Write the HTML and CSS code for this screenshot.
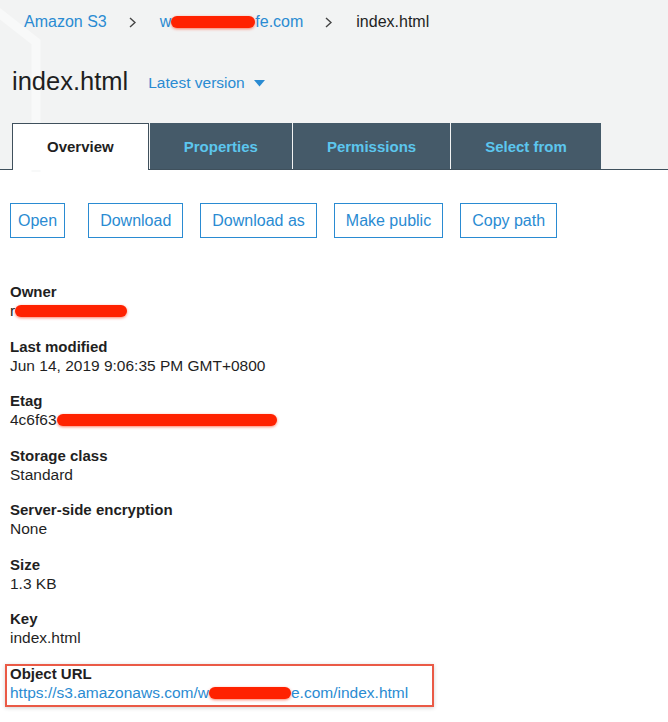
FILE: index.html
```html
<!DOCTYPE html>
<html lang="en">
<head>
<meta charset="utf-8">
<title>index.html - Amazon S3</title>
<link rel="stylesheet" href="styles.css">
</head>
<body>
<header class="header">
  <svg class="deco" width="60" height="175" viewBox="0 0 60 175"><polyline points="-10,6 36,42 36,172" fill="none" stroke="#f8f9f9" stroke-width="9"/></svg>
  <nav class="crumbs">
    <a class="link" href="#">Amazon S3</a>
    <svg class="chev" width="7" height="11" viewBox="0 0 7 11"><polyline points="1,1 6,5.5 1,10" fill="none" stroke="#444" stroke-width="1.4"/></svg>
    <a class="link" href="#">w<span class="redact r-crumb" aria-hidden="true"></span>fe.com</a>
    <svg class="chev" width="7" height="11" viewBox="0 0 7 11"><polyline points="1,1 6,5.5 1,10" fill="none" stroke="#444" stroke-width="1.4"/></svg>
    <span class="crumb-current">index.html</span>
  </nav>
  <div class="title-row">
    <h1 class="title">index.html</h1>
    <span class="version">Latest version <svg width="11" height="7" viewBox="0 0 11 7"><polygon points="0,0 11,0 5.5,6.5" fill="#2a8bd2"/></svg></span>
  </div>
  <div class="tabs">
    <div class="tab active">Overview</div>
    <div class="tab">Properties</div>
    <div class="tab">Permissions</div>
    <div class="tab">Select from</div>
  </div>
</header>
<main class="content">
  <div class="actions">
    <button class="btn btn-open">Open</button>
    <button class="btn">Download</button>
    <button class="btn">Download as</button>
    <button class="btn">Make public</button>
    <button class="btn">Copy path</button>
  </div>
  <dl class="props">
    <div class="prop"><dt>Owner</dt><dd>r<span class="redact r-owner" aria-hidden="true"></span></dd></div>
    <div class="prop"><dt>Last modified</dt><dd>Jun 14, 2019 9:06:35 PM GMT+0800</dd></div>
    <div class="prop"><dt>Etag</dt><dd>4c6f63<span class="redact r-etag" aria-hidden="true"></span></dd></div>
    <div class="prop"><dt>Storage class</dt><dd>Standard</dd></div>
    <div class="prop"><dt>Server-side encryption</dt><dd>None</dd></div>
    <div class="prop"><dt>Size</dt><dd>1.3 KB</dd></div>
    <div class="prop"><dt>Key</dt><dd>index.html</dd></div>
    <div class="prop highlight"><dt>Object URL</dt><dd><a class="link" href="#">https://s3.amazonaws.com/w<span class="redact r-url" aria-hidden="true"></span>e.com/index.html</a></dd></div>
  </dl>
</main>
</body>
</html>
```

FILE: styles.css
```css
* { box-sizing: border-box; }
html, body { margin: 0; padding: 0; background: #fff; }
body {
  font-family: "Liberation Sans", Arial, Helvetica, sans-serif;
  color: #1f1f1f;
  width: 668px;
  height: 722px;
  overflow: hidden;
}
.link { color: #2a8bd2; text-decoration: none; }

.header {
  position: relative;
  background: #f2f3f3;
  padding-top: 12px;
  border-bottom: 1px solid #3f505c;
}
.deco { position: absolute; left: 0; top: 0; }

.crumbs {
  position: relative;
  display: flex;
  align-items: center;
  padding-left: 24px;
  height: 20px;
  font-size: 16px;
  line-height: 20px;
}
.crumbs .chev { margin: 0 24px 0 22px; }
.crumb-current { color: #1f1f1f; }

.title-row {
  position: relative;
  display: flex;
  align-items: center;
  margin-top: 34px;
  padding-left: 12px;
  height: 30px;
}
.title {
  margin: 0;
  font-size: 25.5px;
  line-height: 30px;
  font-weight: normal;
  color: #1f1f1f;
}
.version {
  display: flex;
  align-items: center;
  margin-left: 20px;
  margin-top: 4px;
  font-size: 15.5px;
  color: #2a8bd2;
}
.version svg { margin-left: 9px; }

.tabs {
  position: relative;
  display: flex;
  gap: 1px;
  margin-top: 27px;
  padding-left: 12px;
  height: 46px;
}
.tab {
  display: flex;
  align-items: center;
  justify-content: center;
  padding: 0 34px;
  height: 46px;
  background: #455a69;
  color: #5cc6ee;
  font-size: 15px;
  font-weight: bold;
}
.tab.active {
  background: #fff;
  color: #1f1f1f;
  border: 1px solid #3f505c;
  border-bottom: none;
  height: 47px;
  margin-bottom: -1px;
  padding: 0 34px 1px;
}

.content { padding: 33px 10px 0; }
.actions { display: flex; gap: 17px; }
.btn {
  height: 35px;
  padding: 0 11px 0;
  background: #fff;
  border: 1px solid #2a8bd2;
  color: #2a8bd2;
  font-family: inherit;
  font-size: 16px;
  border-radius: 0;
}
.btn-open { padding: 0 7px; margin-right: 6px; }

.props {
  margin: 44px 0 0;
  display: flex;
  flex-direction: column;
  gap: 16px;
}
.prop { position: relative; }
.prop dt, .prop dd {
  margin: 0;
  line-height: 19.25px;
  white-space: nowrap;
}
.prop dt { font-size: 15px; font-weight: bold; color: #1f1f1f; }
.prop dd { font-size: 15.5px; color: #1f1f1f; }

.redact {
  display: inline-block;
  height: 12px;
  vertical-align: -1px;
  background: #ff2200;
  border-radius: 6px;
  box-shadow: 0 1px 3px rgba(255, 40, 0, 0.6);
}
.r-crumb { width: 84px; }
.r-owner { width: 112px; }
.r-etag { width: 220px; }
.r-url { width: 82px; }

.highlight::after {
  content: "";
  position: absolute;
  left: -5px;
  top: 0;
  width: 425px;
  bottom: -5px;
  border: 2px solid #ea5a46;
  box-shadow: 0 1px 4px rgba(0, 0, 0, 0.18);
  pointer-events: none;
}
```
